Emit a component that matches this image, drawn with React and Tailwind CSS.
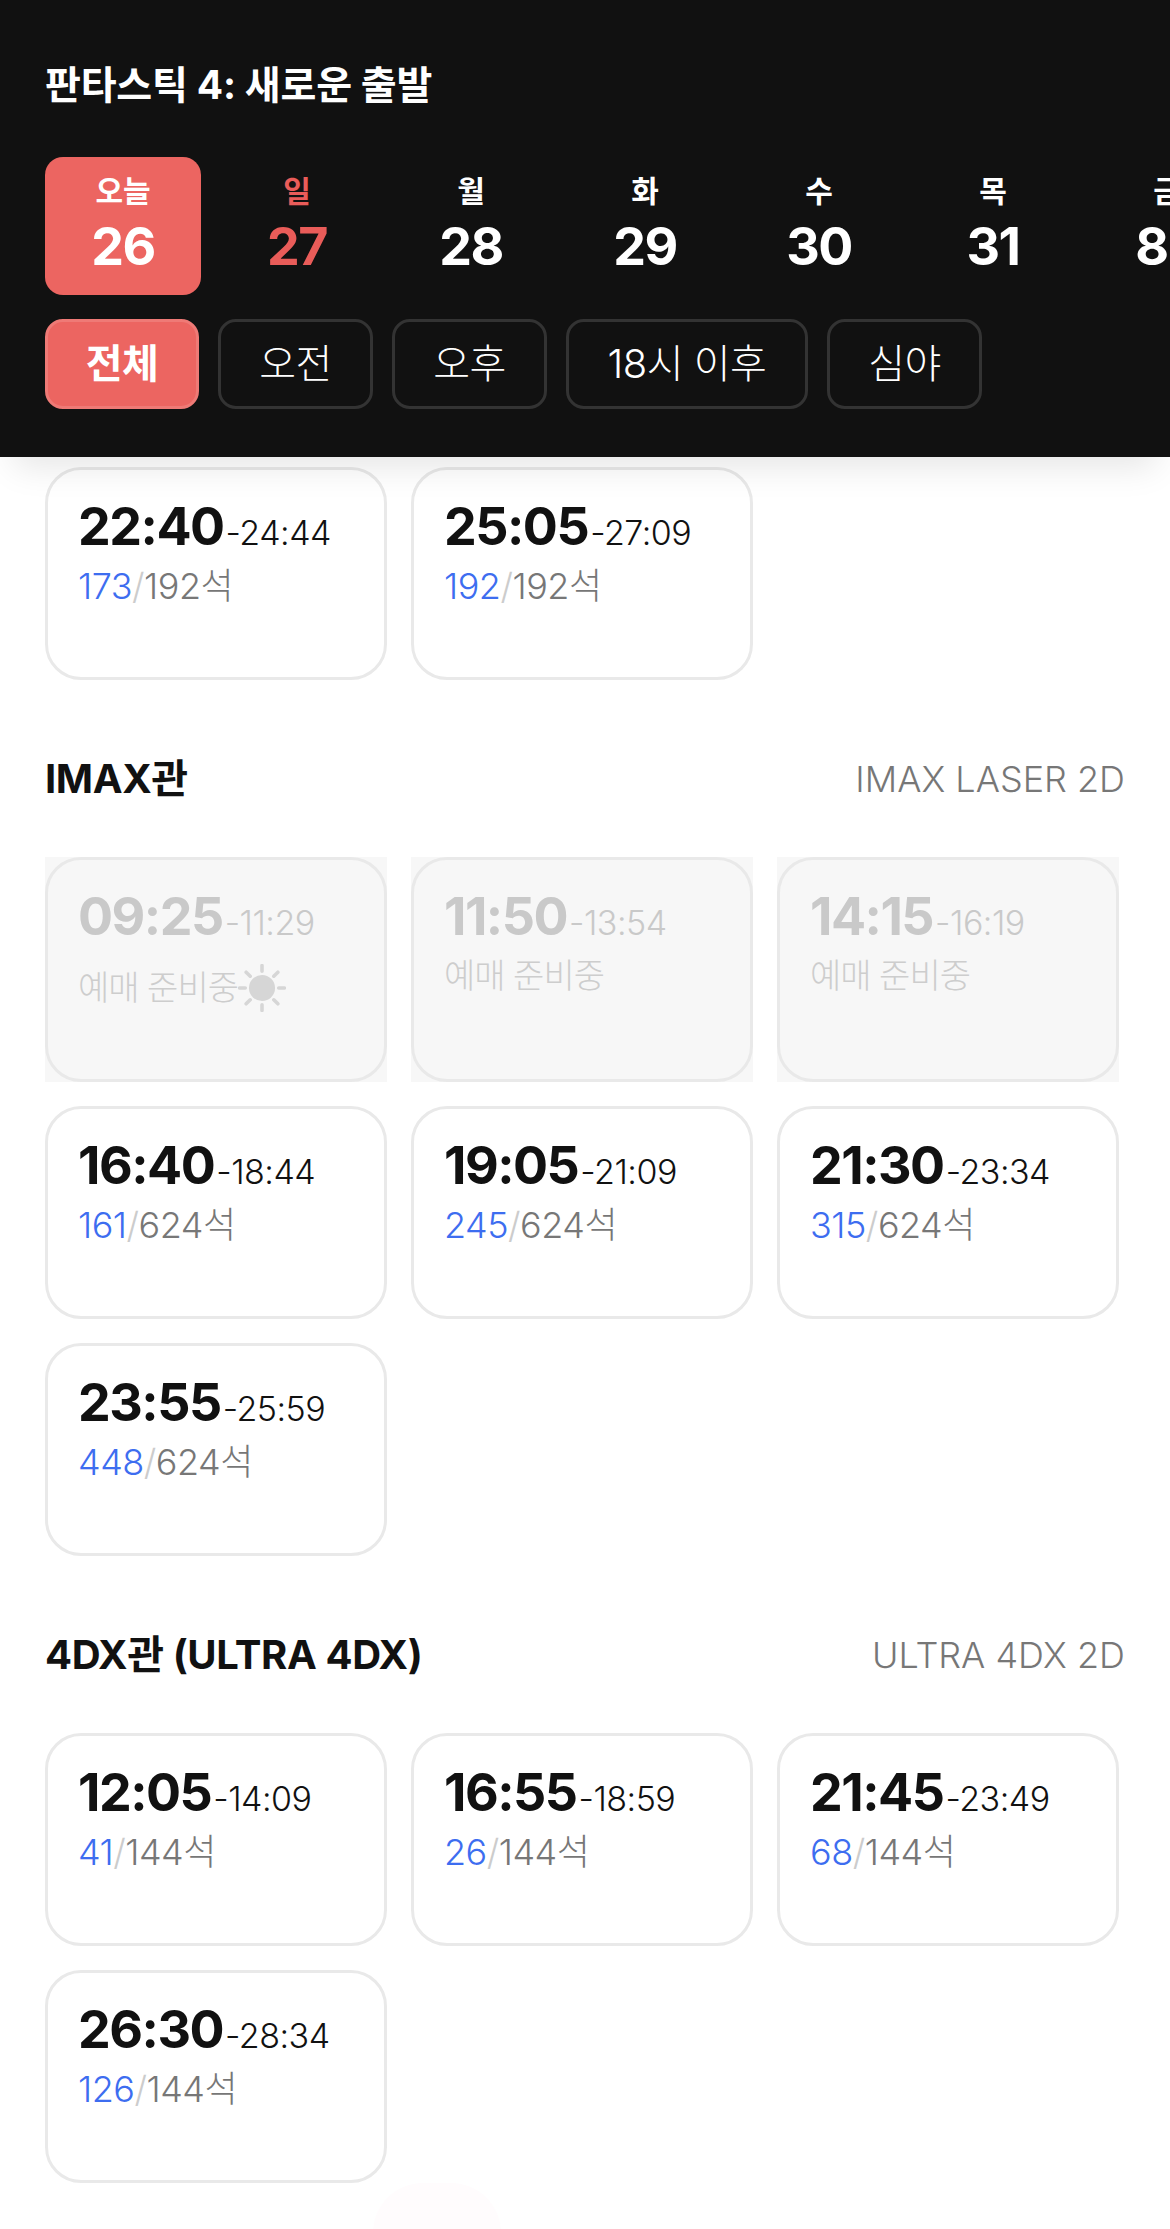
const dates = [
  { label: '오늘', day: '26', active: true },
  { label: '일', day: '27', sunday: true },
  { label: '월', day: '28' },
  { label: '화', day: '29' },
  { label: '수', day: '30' },
  { label: '목', day: '31' },
  { label: '금', day: '8.1' },
]

const filters = [
  { label: '전체', width: 'w-[154px]', active: true },
  { label: '오전', width: 'w-[155px]' },
  { label: '오후', width: 'w-[155px]' },
  { label: '18시 이후', width: 'w-[242px]' },
  { label: '심야', width: 'w-[155px]' },
]

const sections = [
  {
    title: 'IMAX관',
    format: 'IMAX LASER 2D',
    total: 624,
    times: [
      { start: '09:25', end: '11:29', pending: true, sun: true },
      { start: '11:50', end: '13:54', pending: true },
      { start: '14:15', end: '16:19', pending: true },
      { start: '16:40', end: '18:44', seats: 161 },
      { start: '19:05', end: '21:09', seats: 245 },
      { start: '21:30', end: '23:34', seats: 315 },
      { start: '23:55', end: '25:59', seats: 448 },
    ],
  },
  {
    title: '4DX관 (ULTRA 4DX)',
    format: 'ULTRA 4DX 2D',
    total: 144,
    times: [
      { start: '12:05', end: '14:09', seats: 41 },
      { start: '16:55', end: '18:59', seats: 26 },
      { start: '21:45', end: '23:49', seats: 68 },
      { start: '26:30', end: '28:34', seats: 126 },
    ],
  },
]

const SunIcon = () => (
  <svg width="48" height="48" viewBox="1 1 46 46" className="shrink-0 text-[#d6d6d6]">
    <circle cx="24" cy="24" r="12.5" fill="currentColor" />
    <g stroke="currentColor" strokeWidth="3.4" strokeLinecap="round">
      <path d="M24 2.5v5.5M24 40v5.5M2.5 24H8M40 24h5.5M8.8 8.8l3.9 3.9M35.3 35.3l3.9 3.9M39.2 8.8l-3.9 3.9M12.7 35.3l-3.9 3.9" />
    </g>
  </svg>
)

const TimeCard = ({ start, end, seats, total, pending, sun }) => {
  if (pending) {
    return (
      <div className="h-[225px] bg-[#f7f7f7]">
        <div className="h-full rounded-[36px] border-[3px] border-[#e9e9e9] px-[30px] pt-[31px]">
          <div className="flex items-baseline h-[52px] leading-[52px] text-[#c9c9c9]">
            <span className="text-[52px] font-bold tracking-[-1.5px]">{start}</span>
            <span className="text-[34px] font-light tracking-[-0.5px] ml-[2px]">-{end}</span>
          </div>
          {sun ? (
            <div className="flex items-center h-[49px] mt-[15px] pt-[10px] text-[34px] font-light text-[#cdcdcd] tracking-[-1px]">
              <span>예매 준비중</span>
              <SunIcon />
            </div>
          ) : (
            <div className="h-[36px] leading-[36px] mt-[15px] text-[34px] font-light text-[#cdcdcd] tracking-[-1px]">
              예매 준비중
            </div>
          )}
        </div>
      </div>
    )
  }

  return (
    <div className="h-[213px] rounded-[36px] border-[3px] border-[#e9e9e9] bg-white px-[30px] pt-[31px]">
      <div className="flex items-baseline h-[52px] leading-[52px] text-[#111111]">
        <span className="text-[52px] font-bold tracking-[-1.5px]">{start}</span>
        <span className="text-[34px] font-[350] tracking-[-0.5px] ml-[2px]">-{end}</span>
      </div>
      <div className="h-[36px] leading-[36px] mt-[15px] text-[36px] font-light tracking-[-0.5px] text-[#777777]">
        <span className="text-[#3d6df0]">{seats}</span>
        <span className="text-[#cccccc]">/</span>
        <span>{total}석</span>
      </div>
    </div>
  )
}

export default function App() {
  return (
    <div className="relative w-[1170px] h-[2229px] overflow-hidden bg-white font-['Inter','Noto_Sans_CJK_KR',sans-serif]">
      <header className="relative z-10 h-[457px] bg-[#111111] pt-[61px] shadow-[0_24px_32px_-14px_rgba(0,0,0,0.1)]">
        <h1 className="px-[45px] text-[39px] leading-[48px] font-bold tracking-[-0.2px] text-white">판타스틱 4: 새로운 출발</h1>
        <div className="flex gap-[18px] mt-[48px] pl-[45px] overflow-hidden">
          {dates.map((d) => (
            <div
              key={d.day}
              className={`flex flex-col items-center w-[156px] h-[138px] shrink-0 rounded-[18px] pt-[15px] ${d.active ? 'bg-[#ec6561] text-white' : d.sunday ? 'text-[#e95c59]' : 'text-white'}`}
            >
              <span className="text-[30px] leading-[38px] font-semibold">{d.label}</span>
              <span className="text-[52px] leading-[74px] font-bold tracking-[-1.5px]">{d.day}</span>
            </div>
          ))}
        </div>
        <div className="flex gap-[19px] mt-[24px] px-[45px]">
          {filters.map((f) => (
            <button
              key={f.label}
              className={`h-[90px] ${f.width} rounded-[18px] border-[3px] text-[40px] tracking-[-0.5px] ${f.active ? 'bg-[#ec6561] border-[#ef7a76] text-white font-bold' : 'border-[#333333] text-white font-light'}`}
            >
              {f.label}
            </button>
          ))}
        </div>
      </header>

      <main className="px-[45px] pt-[10px]">
        <div className="grid grid-cols-[342px_342px_342px] gap-[24px]">
          <TimeCard start="22:40" end="24:44" seats={173} total={192} />
          <TimeCard start="25:05" end="27:09" seats={192} total={192} />
        </div>

        {sections.map((s) => (
          <section key={s.title} className="mt-[76px]">
            <div className="flex items-center justify-between h-[46px]">
              <h2 className="text-[40px] font-bold tracking-[-0.4px] text-[#111111]">{s.title}</h2>
              <span className="text-[36px] font-light text-[#777777]">{s.format}</span>
            </div>
            <div className="grid grid-cols-[342px_342px_342px] gap-[24px] mt-[55px]">
              {s.times.map((t) => (
                <TimeCard key={t.start} {...t} total={s.total} />
              ))}
            </div>
          </section>
        ))}
      </main>

      <div className="absolute left-[373px] top-[2183px] w-[128px] h-[80px] rounded-t-[50px] bg-[#fffcfd]" />
    </div>
  )
}
